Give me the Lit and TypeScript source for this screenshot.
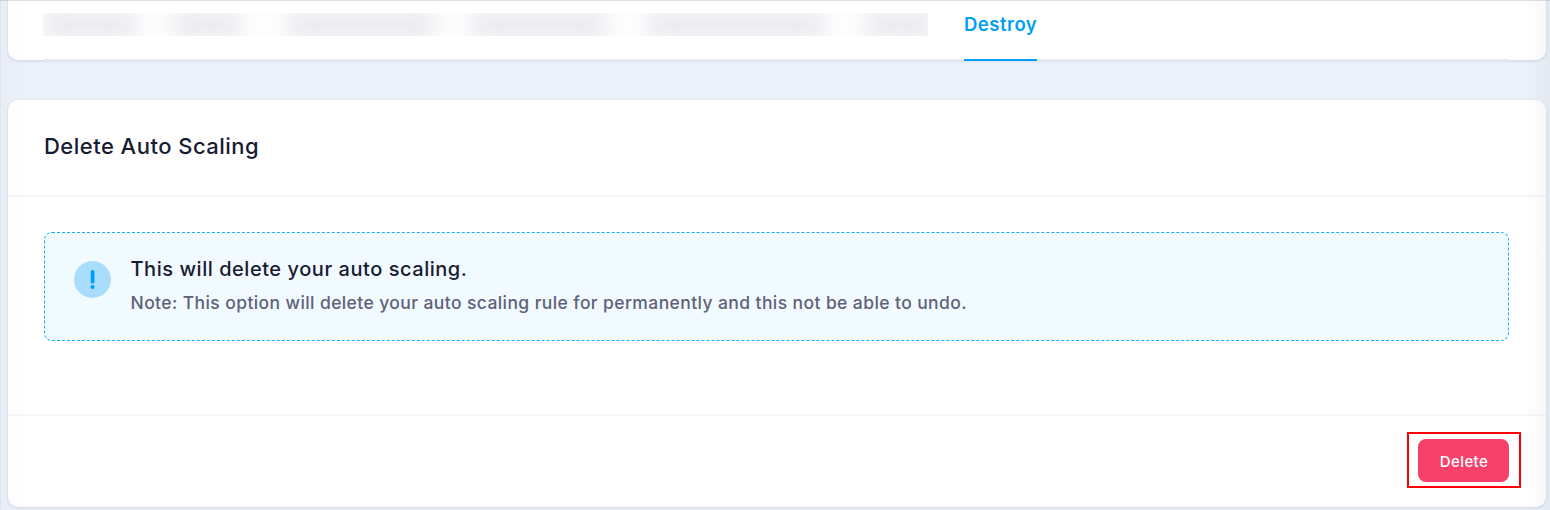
import { LitElement, html, css } from "lit";
import { customElement } from "lit/decorators.js";

@customElement("app-root")
export class AppRoot extends LitElement {
  static styles = css`
    :host { display: block; height: 510px; overflow: hidden; font-family: "Inter", "Noto Sans", sans-serif; color: #181c32; background: #ebf0f9; }
    .page { box-sizing: border-box; position: relative; height: 510px; padding: 0 4px 0 8px; display: flex; flex-direction: column; gap: 40px; }
    .page::before { content: ""; position: absolute; inset: 0; pointer-events: none; z-index: 2;
      background: linear-gradient(rgba(60,65,75,.16), rgba(60,65,75,.16)) top / 100% 1px no-repeat,
        linear-gradient(rgba(60,70,90,.05), rgba(60,70,90,.05)) left / 1px 100% no-repeat,
        linear-gradient(to right, rgba(100,110,130,.02), rgba(100,110,130,0)) left / 30px 100% no-repeat,
        linear-gradient(to left, rgba(70,80,90,.045), rgba(70,80,90,0)) right / 26px 100% no-repeat; }
    .card { box-sizing: border-box; background: #fff; box-shadow: 0 1px 3px rgba(76,87,125,.18); border-radius: 10px; }
    .tabs-card { height: 60px; border-radius: 0 0 10px 10px; padding: 0 37px 0 35px; }
    .tabs { box-sizing: border-box; display: flex; height: 61px; gap: 36px; border-bottom: 2px solid #e5e8f0; margin-left: 1px; }
    .redacted { display: flex; width: 885px; height: 23px; margin: 13px 0 0 -1px; overflow: hidden; background: #fdfdfe; }
    .smudge { flex: none; height: 27px; margin-top: -2px; background: #e8e9ee; filter: blur(10px); }
    .tab { box-sizing: border-box; width: 73px; height: 61px; border-bottom: 2px solid #009ef7; color: #009ef7; font-weight: 600; font-size: 18.5px; letter-spacing: .5px; line-height: 48px; white-space: nowrap; }
    .main { height: 407px; display: flex; flex-direction: column; }
    .head { box-sizing: border-box; height: 97px; padding: 0 36px 3px; border-bottom: 2px solid #f6f7f9; display: flex; align-items: center; }
    h3 { margin: 0; font-weight: 500; font-size: 22px; letter-spacing: .47px; line-height: 30px; white-space: nowrap; }
    .body { height: 219px; padding: 35px 37px 0 36px; box-sizing: border-box; border-bottom: 2px solid #f6f7f9; }
    .notice { box-sizing: border-box; height: 109px; border: 1px dashed #1fabfa; border-radius: 8px; background: #f1faff; padding: 22px 29px; display: flex; gap: 19.5px; }
    .icon { width: 37px; height: 37px; margin-top: 6px; flex: none; }
    h4 { margin: 0; font-weight: 500; font-size: 20px; letter-spacing: .54px; line-height: 28px; white-space: nowrap; }
    .note { margin-top: 7px; color: #5e6278; font-weight: 500; font-size: 17.5px; letter-spacing: .4px; line-height: 26px; white-space: nowrap; }
    .foot { display: flex; justify-content: flex-end; padding: 16px 25px 0 0; }
    .mark { border: 2px solid #f00; padding: 5px 10px 4px 9px; }
    button { display: block; width: 91px; height: 43px; border: 0; border-radius: 8px; background: #f5416c; color: #fff; font: 500 15px "Inter", "Noto Sans", sans-serif; letter-spacing: .4px; padding: 1px 0 0 1px; }
  `;

  render() {
    const smudges = [[2, 90], [40, 64], [50, 144], [40, 132], [44, 174], [44, 66]];
    return html`<div class="page">
      <div class="card tabs-card"><div class="tabs">
        <div class="redacted">${smudges.map(([g, w]) => html`<span class="smudge" style="width:${w}px;margin-left:${g}px"></span>`)}</div>
        <div class="tab">Destroy</div>
      </div></div>
      <section class="card main">
        <div class="head"><h3>Delete Auto Scaling</h3></div>
        <div class="body"><div class="notice">
          <svg class="icon" viewBox="0 0 37 37"><circle cx="18.5" cy="18.5" r="18.5" fill="#a8defc"/><rect x="16.7" y="9" width="3.8" height="13.5" rx="1.8" fill="#009ef7"/><circle cx="18.5" cy="26" r="2" fill="#009ef7"/></svg>
          <div><h4>This will delete your auto scaling.</h4>
          <div class="note">Note: This option will delete your auto scaling rule for permanently and this not be able to undo.</div></div>
        </div></div>
        <div class="foot"><div class="mark"><button>Delete</button></div></div>
      </section>
    </div>`;
  }
}
